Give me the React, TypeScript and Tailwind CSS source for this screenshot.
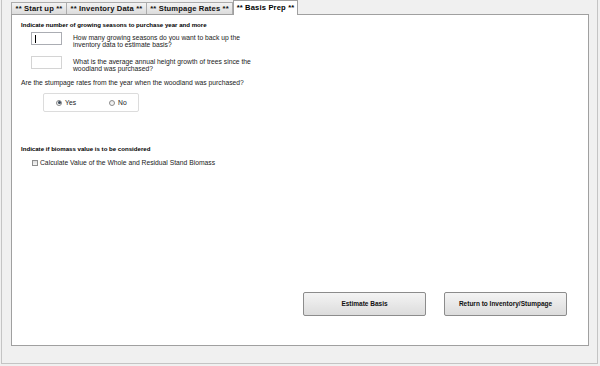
import React from "react";

const font = { fontFamily: '"Liberation Sans", Arial, sans-serif' };

function Tab({ label, w, active }: { label: string; w: string; active?: boolean }) {
  if (active) {
    return (
      <div
        className={`${w} h-[15px] -mb-[1px] relative z-10 bg-white border border-b-0 border-[#a0a0a0] flex items-center justify-center text-[7.6px] tracking-[0.15px] font-bold text-black`}
      >
        {label}
      </div>
    );
  }
  return (
    <div
      className={`${w} h-[12px] bg-gradient-to-b from-[#f3f3f3] to-[#dcdcdc] border border-b-0 border-[#acacac] -ml-[1px] first:ml-0 flex items-center justify-center text-[7.6px] tracking-[0.15px] font-bold text-[#111]`}
    >
      {label}
    </div>
  );
}

function Radio({ checked, label }: { checked?: boolean; label: string }) {
  return (
    <div className="flex items-center gap-[3px]">
      <div className="w-[6px] h-[6px] rounded-full border border-[#8a8a8a] bg-gradient-to-b from-[#e8e8e8] to-[#fafafa] flex items-center justify-center">
        {checked && <div className="w-[3px] h-[3px] rounded-full bg-[#3a4a5a]" />}
      </div>
      <span className="text-[6.75px] leading-[8px] text-[#222]">{label}</span>
    </div>
  );
}

export default function App() {
  return (
    <div className="w-[600px] h-[366px] bg-[#f0f0f0] overflow-hidden" style={font}>
      <div className="ml-[1px] mr-[2px] h-[364px] border-l border-r border-b border-[#c4c4c4] flex flex-col pl-[9px] pr-[8px] pb-[17px]">
        <div className="flex items-end h-[14px] shrink-0">
          <Tab label="** Start up **" w="w-[56px]" />
          <Tab label="** Inventory Data **" w="w-[81px]" />
          <Tab label="** Stumpage Rates **" w="w-[87px]" />
          <Tab label="** Basis Prep **" w="w-[65px]" active />
        </div>
        <div className="flex-1 bg-white border border-[#a0a0a0] flex flex-col pl-[9px] pt-[5px] text-black">
          <div className="text-[6.1px] leading-[9px] font-bold">
            Indicate number of growing seasons to purchase year and more
          </div>
          <div className="flex items-start h-[13px] mt-[3px] pl-[10px]">
            <div className="w-[31px] h-[13px] shrink-0 border border-[#abadb3] flex items-center pl-[3px]">
              <div className="w-[1px] h-[8px] bg-black" />
            </div>
            <div className="ml-[11px] mt-[2px] text-[6.75px] leading-[7px] text-[#222]">
              <div>How many growing seasons do you want to back up the</div>
              <div>inventory data to estimate basis?</div>
            </div>
          </div>
          <div className="flex items-start h-[13px] mt-[11px] pl-[10px]">
            <div className="w-[31px] h-[13px] shrink-0 border border-[#d4d4d4]" />
            <div className="ml-[11px] mt-[2px] text-[6.75px] leading-[7px] text-[#222]">
              <div>What is the average annual height growth of trees since the</div>
              <div>woodland was purchased?</div>
            </div>
          </div>
          <div className="mt-[10px] text-[6.75px] leading-[8px] text-[#222]">
            Are the stumpage rates from the year when the woodland was purchased?
          </div>
          <div className="ml-[22px] mt-[6px] w-[96px] h-[19px] border border-[#dcdcdc] rounded-[2px] flex items-center pl-[12px] gap-[33px]">
            <Radio checked label="Yes" />
            <Radio label="No" />
          </div>
          <div className="mt-[33px] text-[6.1px] leading-[8px] font-bold">
            Indicate if biomass value is to be considered
          </div>
          <div className="mt-[6px] ml-[11px] flex items-center gap-[2px]">
            <div className="w-[6px] h-[6px] border border-[#8e8f8f] bg-gradient-to-b from-[#dedede] to-[#f6f6f6]" />
            <span className="text-[6.75px] leading-[8px] text-[#222]">
              Calculate Value of the Whole and Residual Stand Biomass
            </span>
          </div>
          <div className="mt-auto mb-[29px] flex justify-end gap-[18px] pr-[21px]">
            <button className="w-[123px] h-[24px] border border-[#8c8c8c] rounded-[2px] bg-gradient-to-b from-[#f4f4f4] to-[#dcdcdc] text-[6.5px] font-bold text-[#111]">
              Estimate Basis
            </button>
            <button className="w-[123px] h-[24px] border border-[#8c8c8c] rounded-[2px] bg-gradient-to-b from-[#f4f4f4] to-[#dcdcdc] text-[6.5px] font-bold text-[#111]">
              Return to Inventory/Stumpage
            </button>
          </div>
        </div>
      </div>
    </div>
  );
}
